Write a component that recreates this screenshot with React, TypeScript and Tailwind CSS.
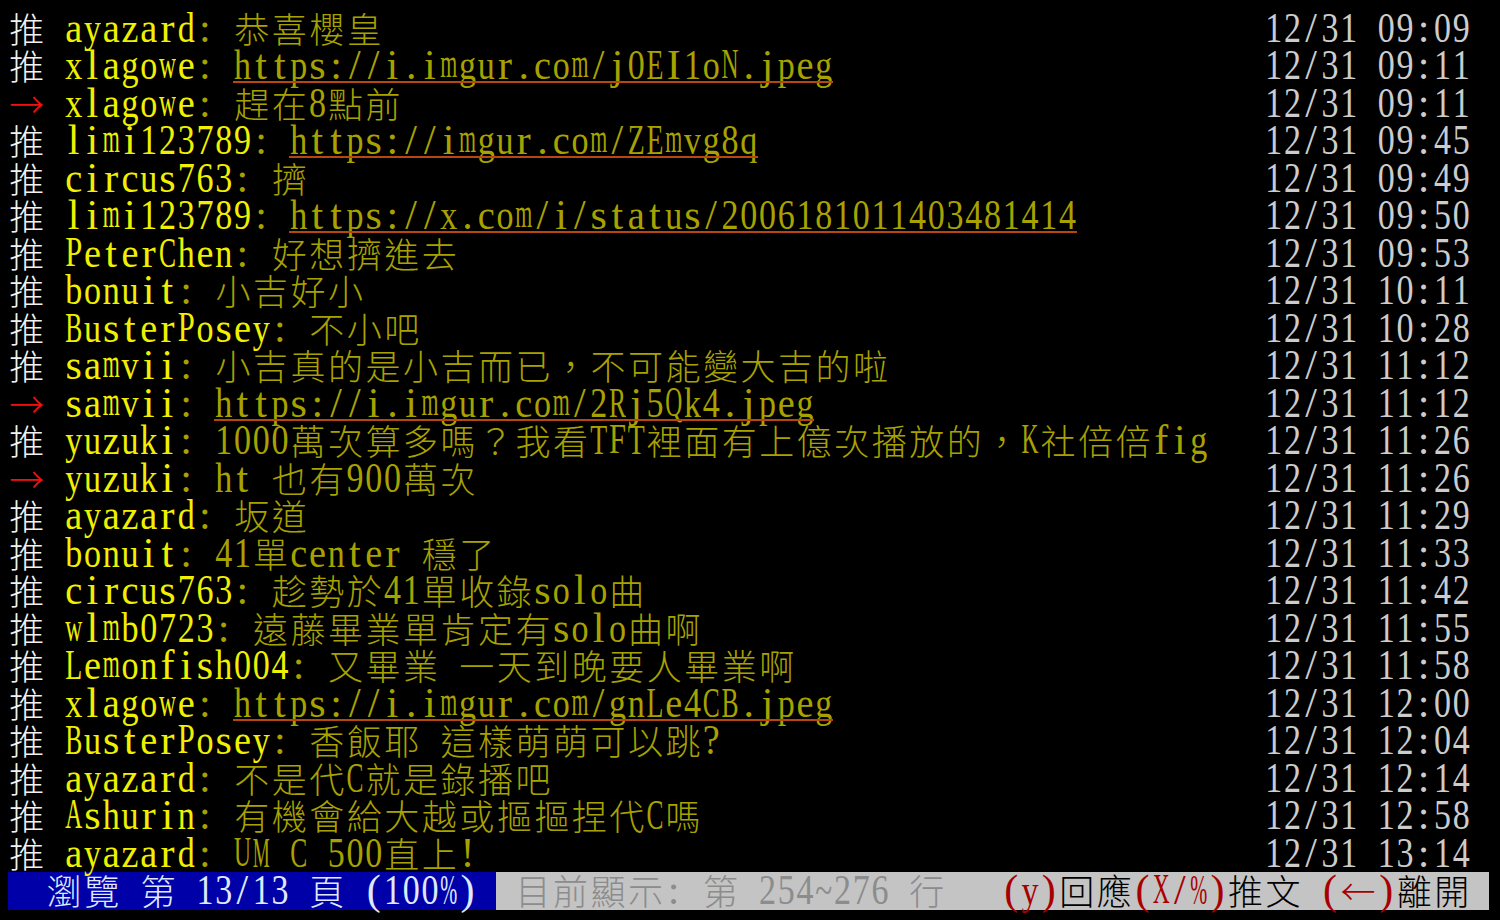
import React from "react";
import clsx from "clsx";

type Seg = { t: string; c: string; u?: boolean };

// terminal palette
const WHITE = "text-[#f2f2f2]";
const RED = "text-[#f01010]";
const YELLOW = "text-[#f0f000]";
const OLIVE = "text-[#a8a200]";
const GRAY = "text-[#cccccc]";
const BAR_TEXT = "text-[#dfe8ff]";
const DIM = "text-[#8c8c8c]";
const DARK_RED = "text-[#a80000]";
const BLACK = "text-black";

const COLS_BEFORE_TIME = 67;

const pushes: [string, string, string, string, boolean?][] = [
  ["推", "ayazard", "恭喜櫻皇", "09:09"],
  ["推", "xlagowe", "https://i.imgur.com/j0EI1oN.jpeg", "09:11", true],
  ["→", "xlagowe", "趕在8點前", "09:11"],
  ["推", "limi123789", "https://imgur.com/ZEmvg8q", "09:45", true],
  ["推", "circus763", "擠", "09:49"],
  ["推", "limi123789", "https://x.com/i/status/2006181011403481414", "09:50", true],
  ["推", "PeterChen", "好想擠進去", "09:53"],
  ["推", "bonuit", "小吉好小", "10:11"],
  ["推", "BusterPosey", "不小吧", "10:28"],
  ["推", "samvii", "小吉真的是小吉而已，不可能變大吉的啦", "11:12"],
  ["→", "samvii", "https://i.imgur.com/2Rj5Qk4.jpeg", "11:12", true],
  ["推", "yuzuki", "1000萬次算多嗎？我看TFT裡面有上億次播放的，K社倍倍fig", "11:26"],
  ["→", "yuzuki", "ht 也有900萬次", "11:26"],
  ["推", "ayazard", "坂道", "11:29"],
  ["推", "bonuit", "41單center 穩了", "11:33"],
  ["推", "circus763", "趁勢於41單收錄solo曲", "11:42"],
  ["推", "wlmb0723", "遠藤畢業單肯定有solo曲啊", "11:55"],
  ["推", "Lemonfish004", "又畢業 一天到晚要人畢業啊", "11:58"],
  ["推", "xlagowe", "https://i.imgur.com/gnLe4CB.jpeg", "12:00", true],
  ["推", "BusterPosey", "香飯耶 這樣萌萌可以跳?", "12:04"],
  ["推", "ayazard", "不是代C就是錄播吧", "12:14"],
  ["推", "Ashurin", "有機會給大越或摳摳捏代C嗎", "12:58"],
  ["推", "ayazard", "UM C 500直上!", "13:14"],
];

// Times-style advance widths (per 1000 em) so each half-width glyph is squeezed into its cell
const advance: Record<string, number> = {};
const widthGroups: [string, number][] = [
  ["acez?", 444],
  ["fr()!-I", 333],
  ["ijlt:/", 278],
  ["sJ", 389],
  ["m", 778],
  ["wADGHKNOQUVXY", 722],
  ["BCR", 667],
  ["ELTZ", 611],
  ["FPS", 556],
  ["M", 889],
  ["W", 944],
  ["%", 833],
  ["~", 541],
  [".", 250],
];
widthGroups.forEach(([chars, w]) => Array.from(chars).forEach((ch) => (advance[ch] = w)));

const GLYPH_SIZE = 42;

const isWide = (ch: string) => ch.charCodeAt(0) > 0x2000;

const width = (s: string) => Array.from(s).reduce((n, ch) => n + (isWide(ch) ? 2 : 1), 0);

function HalfGlyph({ ch }: { ch: string }) {
  const adv = ((advance[ch] ?? 500) * GLYPH_SIZE) / 1000;
  const k = Math.min(1, 17 / adv);
  return (
    <span
      className="-mt-[3px] block origin-top whitespace-pre font-['Liberation_Serif',serif] leading-none"
      style={{ fontSize: GLYPH_SIZE * k, transform: `scaleY(${1 / k})` }}
    >
      {ch}
    </span>
  );
}

function Cell({ ch, color, u }: { ch: string; color: string; u?: boolean }) {
  const wide = isWide(ch);
  return (
    <span
      className={clsx(
        "relative flex h-[37.5px] shrink-0 items-start justify-center",
        wide ? "w-[37.5px]" : "w-[18.75px]",
        u && "after:absolute after:inset-x-0 after:top-[34px] after:h-[2px] after:bg-[#b8460f] after:content-['']",
        color
      )}
    >
      {ch !== " " &&
        (wide ? (
          <span className="block font-['Noto_Sans_CJK_TC','Noto_Sans_CJK_SC',sans-serif] text-[35px] leading-[37.5px] font-light -translate-y-[1px]">
            {ch}
          </span>
        ) : (
          <HalfGlyph ch={ch} />
        ))}
    </span>
  );
}

function Cells({ segs }: { segs: Seg[] }) {
  return (
    <>
      {segs.flatMap((s, si) =>
        Array.from(s.t).map((ch, i) => <Cell key={`${si}-${i}`} ch={ch} color={s.c} u={s.u && ch !== " "} />)
      )}
    </>
  );
}

function PushRow({ mark, id, text, time, url }: { mark: string; id: string; text: string; time: string; url?: boolean }) {
  const used = 2 + 1 + width(id) + 2 + width(text);
  const pad = " ".repeat(Math.max(1, COLS_BEFORE_TIME - used));
  const segs: Seg[] = [
    { t: mark, c: mark === "推" ? WHITE : RED },
    { t: " ", c: WHITE },
    { t: id, c: YELLOW },
    { t: ": ", c: OLIVE },
    { t: text, c: OLIVE, u: url },
    { t: pad, c: OLIVE },
    { t: "12/31 " + time, c: GRAY },
  ];
  return (
    <div className="flex h-[37.5px]">
      <Cells segs={segs} />
    </div>
  );
}

function StatusBar() {
  return (
    <div className="flex h-[37.5px]">
      <div className="flex bg-[#0000a8]">
        <Cells segs={[{ t: "  瀏覽 第 13/13 頁 (100%) ", c: BAR_TEXT }]} />
      </div>
      <div className="flex bg-[#c4c4c4]">
        <Cells
          segs={[
            { t: " 目前顯示: 第 254~276 行   ", c: DIM },
            { t: "(y)", c: DARK_RED },
            { t: "回應", c: BLACK },
            { t: "(X/%)", c: DARK_RED },
            { t: "推文", c: BLACK },
            { t: " (←)", c: DARK_RED },
            { t: "離開", c: BLACK },
            { t: " ", c: BLACK },
          ]}
        />
      </div>
    </div>
  );
}

export default function App() {
  return (
    <div className="h-[920px] w-[1500px] overflow-hidden bg-black pl-2 pt-[9.5px]">
      {pushes.map(([mark, id, text, time, url], i) => (
        <PushRow key={i} mark={mark} id={id} text={text} time={time} url={url} />
      ))}
      <StatusBar />
    </div>
  );
}
